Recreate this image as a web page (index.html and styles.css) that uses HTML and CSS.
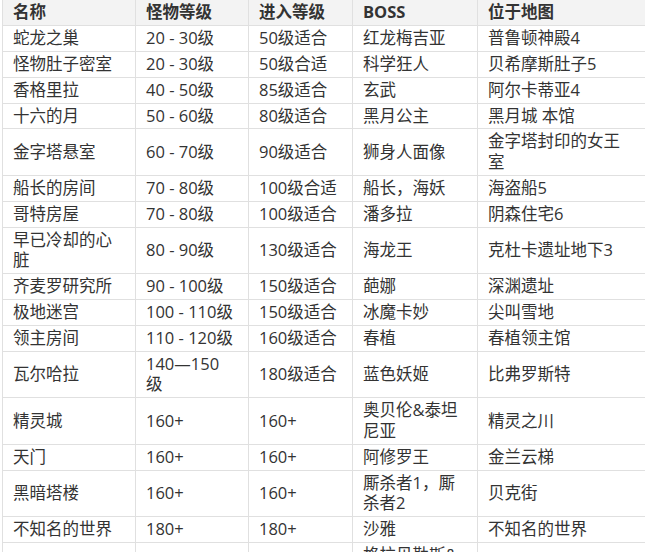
FILE: index.html
```html
<!DOCTYPE html>
<html lang="zh-CN">
<head>
<meta charset="utf-8">
<title>副本等级</title>
<link rel="stylesheet" href="styles.css">
</head>
<body>
<div class="page">
<table class="dungeons">
<colgroup>
<col class="c-name"><col class="c-mon"><col class="c-enter"><col class="c-boss"><col class="c-map">
</colgroup>
<thead>
<tr><th>名称</th><th>怪物等级</th><th>进入等级</th><th>BOSS</th><th>位于地图</th></tr>
</thead>
<tbody>
<tr><td>蛇龙之巢</td><td>20 - 30级</td><td>50级适合</td><td>红龙梅吉亚</td><td>普鲁顿神殿4</td></tr>
<tr><td>怪物肚子密室</td><td>20 - 30级</td><td>50级合适</td><td>科学狂人</td><td>贝希摩斯肚子5</td></tr>
<tr><td>香格里拉</td><td>40 - 50级</td><td>85级适合</td><td>玄武</td><td>阿尔卡蒂亚4</td></tr>
<tr><td>十六的月</td><td>50 - 60级</td><td>80级适合</td><td>黑月公主</td><td>黑月城 本馆</td></tr>
<tr><td>金字塔悬室</td><td>60 - 70级</td><td>90级适合</td><td>狮身人面像</td><td>金字塔封印的女王室</td></tr>
<tr><td>船长的房间</td><td>70 - 80级</td><td>100级合适</td><td>船长，海妖</td><td>海盗船5</td></tr>
<tr><td>哥特房屋</td><td>70 - 80级</td><td>100级适合</td><td>潘多拉</td><td>阴森住宅6</td></tr>
<tr><td>早已冷却的心脏</td><td>80 - 90级</td><td>130级适合</td><td>海龙王</td><td>克杜卡遗址地下3</td></tr>
<tr><td>齐麦罗研究所</td><td>90 - 100级</td><td>150级适合</td><td>葩娜</td><td>深渊遗址</td></tr>
<tr><td>极地迷宫</td><td>100 - 110级</td><td>150级适合</td><td>冰魔卡妙</td><td>尖叫雪地</td></tr>
<tr><td>领主房间</td><td>110 - 120级</td><td>160级适合</td><td>春植</td><td>春植领主馆</td></tr>
<tr><td>瓦尔哈拉</td><td>140—150<br>级</td><td>180级适合</td><td>蓝色妖姬</td><td>比弗罗斯特</td></tr>
<tr><td>精灵城</td><td>160+</td><td>160+</td><td>奥贝伦&amp;泰坦尼亚</td><td>精灵之川</td></tr>
<tr><td>天门</td><td>160+</td><td>160+</td><td>阿修罗王</td><td>金兰云梯</td></tr>
<tr><td>黑暗塔楼</td><td>160+</td><td>160+</td><td>厮杀者1，厮杀者2</td><td>贝克街</td></tr>
<tr><td>不知名的世界</td><td>180+</td><td>180+</td><td>沙雅</td><td>不知名的世界</td></tr>
<tr><td></td><td></td><td></td><td>格拉贝勒斯&amp;路易斯</td><td></td></tr>
</tbody>
</table>
</div>
</body>
</html>
```
FILE: styles.css
```css
html, body {
  margin: 0;
  padding: 0;
  background: #ffffff;
  overflow: hidden;
}

.page {
  padding-left: 2px;
}

.dungeons {
  border-collapse: collapse;
  table-layout: fixed;
  width: 675px;
  font-family: "Open Sans", "Noto Sans CJK SC", sans-serif;
  font-size: 16.5px;
  line-height: 20.6px;
  color: #333333;
}

.c-name { width: 133px; }
.c-mon { width: 113px; }
.c-enter { width: 104px; }
.c-boss { width: 125px; }
.c-map { width: 200px; }

.dungeons th,
.dungeons td {
  border: 1px solid #e0e0e0;
  padding: 2.1px 10px 2.2px 10px;
  text-align: left;
  vertical-align: middle;
}

.dungeons th {
  background: #f3f3f3;
  font-weight: 700;
  color: #333333;
}

.dungeons td:last-child,
.dungeons th:last-child {
  padding-right: 52px;
}

.dungeons thead tr:first-child th {
  border-top: 0;
}
```
